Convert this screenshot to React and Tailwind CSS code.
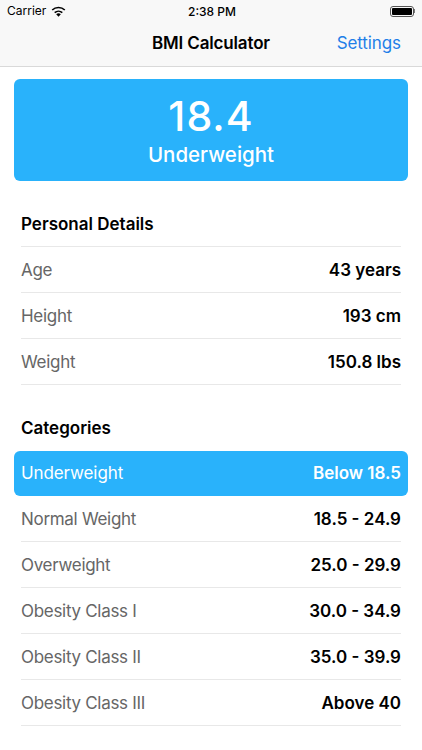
const DETALLES = [
  { label: 'Age', value: '43 years' },
  { label: 'Height', value: '193 cm' },
  { label: 'Weight', value: '150.8 lbs' }
];

const CATEGORIAS = [
  { label: 'Normal Weight', value: '18.5 - 24.9' },
  { label: 'Overweight', value: '25.0 - 29.9' },
  { label: 'Obesity Class I', value: '30.0 - 34.9' },
  { label: 'Obesity Class II', value: '35.0 - 39.9' },
  { label: 'Obesity Class III', value: 'Above 40' }
];

function Wifi() {
  return (
    <svg width="15" height="11" viewBox="0 0 15 11" className="ml-[5px]">
      <path d="M7.5 10.8 L5.2 8.2 A3.4 3.4 0 0 1 9.8 8.2 Z" fill="#000" />
      <path d="M3.7 6.7 A5.6 5.6 0 0 1 11.3 6.7" fill="none" stroke="#000" strokeWidth="1.6" />
      <path d="M1.2 4 A9 9 0 0 1 13.8 4" fill="none" stroke="#000" strokeWidth="1.6" />
    </svg>
  );
}

function Battery() {
  return (
    <div className="flex items-center">
      <div className="w-[24px] h-[11px] rounded-[3px] border border-[#555] p-[1px]">
        <div className="w-full h-full bg-black rounded-[1px]" />
      </div>
      <div className="w-[1px] h-[4px] bg-[#777]" />
    </div>
  );
}

function Row({ label, value }) {
  return (
    <div className="h-[46px] pt-[2px] flex items-center justify-between border-b border-[#e8e8e8] text-[17px]">
      <span className="tracking-[-0.3px] text-[#666]">{label}</span>
      <span className="font-semibold text-black">{value}</span>
    </div>
  );
}

export default function App() {
  return (
    <div className="w-[422px] h-[750px] bg-white overflow-hidden font-['Inter','Liberation_Sans',sans-serif]">
      <div className="h-[67px] bg-[#f8f8f8] border-b border-[#d9d9d9]">
        <div className="h-[22px] pl-[7px] pr-[7px] flex items-center justify-between relative">
          <div className="flex items-center text-[12px] text-black">
            Carrier
            <Wifi />
          </div>
          <span className="absolute left-[188px] top-[3px] text-[12px] font-medium text-black">2:38 PM</span>
          <Battery />
        </div>
        <div className="h-[44px] flex items-center justify-between pl-[152px] pr-[21px]">
          <span className="text-[17px] tracking-[-0.15px] font-semibold text-black">BMI Calculator</span>
          <span className="text-[17px] tracking-[-0.1px] text-[#1f7fe8]">Settings</span>
        </div>
      </div>

      <div className="px-[14px] pt-[12px]">
        <div className="h-[102px] rounded-[6px] bg-[#29b2fb] flex flex-col items-center text-white">
          <span className="text-[41px] tracking-[1px] leading-[48px] font-medium mt-[13px]">18.4</span>
          <span className="text-[20.5px] leading-[24px] font-medium mt-[3px]">Underweight</span>
        </div>
      </div>

      <div className="px-[21px]">
        <div className="h-[66px] flex items-end pb-[9px] border-b border-[#e8e8e8] text-[17px] font-semibold text-black">
          Personal Details
        </div>
        {DETALLES.map((d) => (
          <Row key={d.label} label={d.label} value={d.value} />
        ))}
      </div>

      <div className="px-[21px] h-[66px] flex items-end pb-[10px] text-[17px] font-semibold text-black">Categories</div>

      <div className="px-[14px]">
        <div className="h-[45px] rounded-[6px] bg-[#29b2fb] px-[7px] flex items-center justify-between text-white text-[17px]">
          <span className="tracking-[-0.1px]">Underweight</span>
          <span className="font-semibold">Below 18.5</span>
        </div>
      </div>

      <div className="px-[21px]">
        {CATEGORIAS.map((c) => (
          <Row key={c.label} label={c.label} value={c.value} />
        ))}
      </div>
    </div>
  );
}
